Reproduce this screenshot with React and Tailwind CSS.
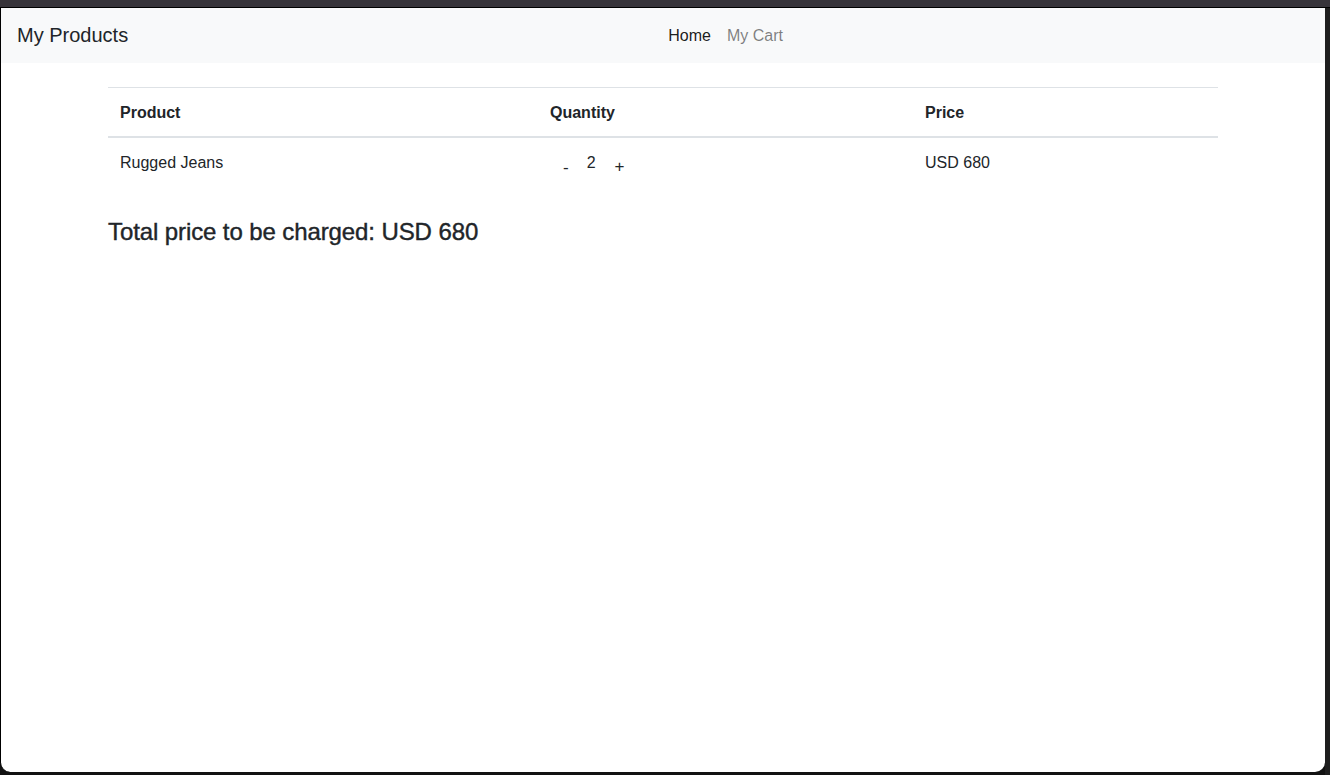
export default function App() {
  const font = { fontFamily: '"Liberation Sans", Arial, sans-serif' };
  return (
    <div className="w-[1330px] h-[775px] bg-[#121212] flex flex-col overflow-hidden text-[#212529]" style={font}>
      <div className="h-[7px] bg-[#37343a] border-b border-black box-content"></div>
      <div className="flex flex-1 min-h-0">
        <div className="w-[1325px] h-[764px] bg-white border-l border-black rounded-b-[10px] flex flex-col">
          <nav className="h-[55px] bg-[#f8f9fa] flex items-center px-4">
            <span className="text-[20px] mr-4 -mt-[2px]">My Products</span>
            <div className="flex-1 flex justify-center pr-[2px]">
              <a className="px-2 text-[16px] text-black/90">Home</a>
              <a className="px-2 text-[16px] text-black/50">My Cart</a>
            </div>
          </nav>
          <div className="w-[1110px] ml-[107px] mt-[24px]">
            <table className="w-full border-collapse text-[16px] mb-4">
              <thead>
                <tr>
                  <th className="text-left font-bold px-3 pt-[13px] pb-[11px] border-t border-b-2 border-[#dee2e6] w-[430px]">Product</th>
                  <th className="text-left font-bold px-3 pt-[13px] pb-[11px] border-t border-b-2 border-[#dee2e6] w-[375px]">Quantity</th>
                  <th className="text-left font-bold px-3 pt-[13px] pb-[11px] border-t border-b-2 border-[#dee2e6]">Price</th>
                </tr>
              </thead>
              <tbody>
                <tr>
                  <td className="px-3 pt-[13px] pb-[12px] align-top">Rugged Jeans</td>
                  <td className="px-3 pt-[13px] pb-[12px] align-top">
                    <div className="flex items-start h-[24px]">
                      <button className="ml-[12px] mt-[8px] px-[1px] text-[17px] leading-none">-</button>
                      <span className="ml-[17px]">2</span>
                      <button className="ml-[19px] mt-[7px] text-[17px] leading-none">+</button>
                    </div>
                  </td>
                  <td className="px-3 pt-[13px] pb-[12px] align-top">USD 680</td>
                </tr>
              </tbody>
            </table>
            <h4 className="text-[24px] leading-[1.2] mt-[31px] tracking-[-0.1px] [-webkit-text-stroke:0.4px]">Total price to be charged: USD 680</h4>
          </div>
        </div>
        <div className="flex-1 bg-[#1e1e1e]"></div>
      </div>
    </div>
  );
}
